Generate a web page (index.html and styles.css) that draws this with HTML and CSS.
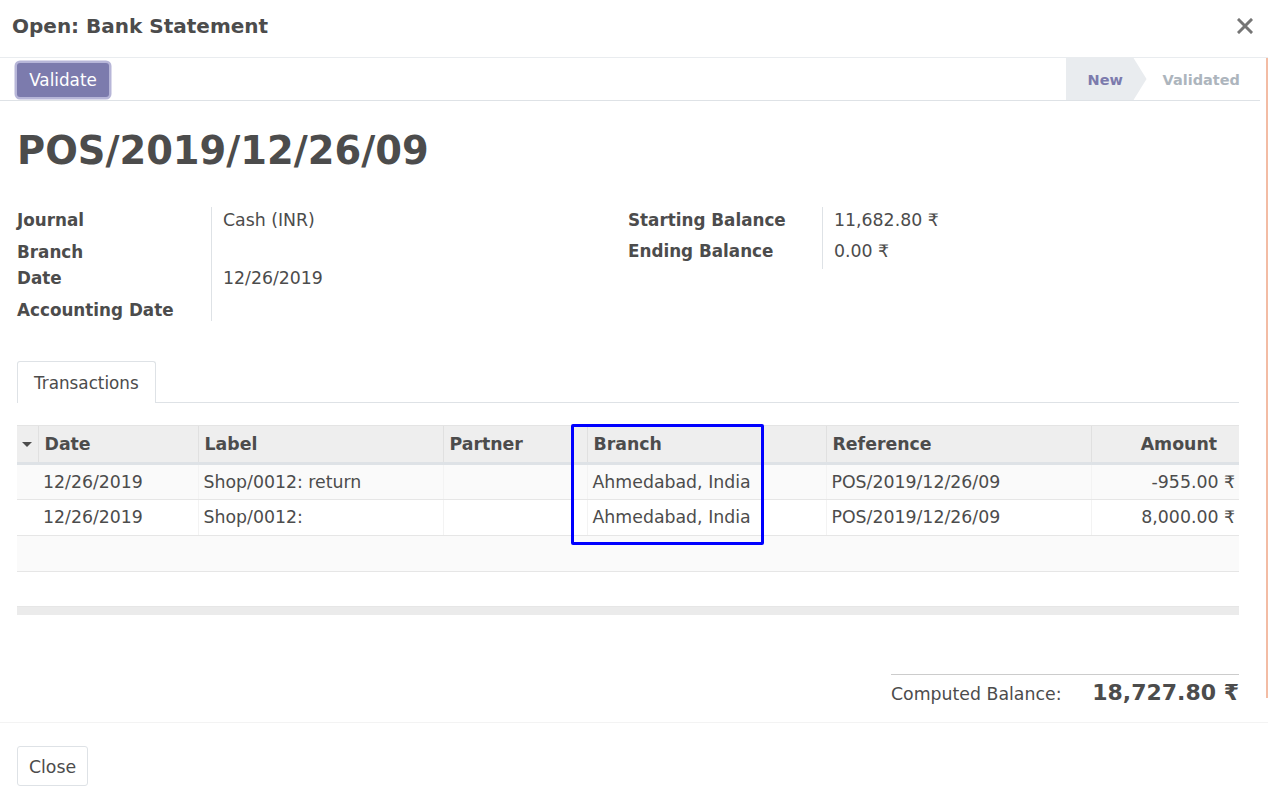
FILE: index.html
```html
<!DOCTYPE html>
<html>
<head>
<meta charset="utf-8">
<link rel="stylesheet" href="styles.css">
</head>
<body>
<div class="modal">
  <header class="modal-header">
    <h4 class="modal-title">Open: Bank Statement</h4>
    <button class="close" aria-label="Close">
      <svg width="16" height="16" viewBox="0 0 16 16"><path d="M2 2 L14 14 M14 2 L2 14" stroke="#757575" stroke-width="3" stroke-linecap="square"/></svg>
    </button>
  </header>
  <main class="modal-body">
    <div class="edge-line"></div>
    <div class="statusbar">
      <div class="actions"><button class="btn-primary">Validate</button></div>
      <div class="stages">
        <span class="stage current">New</span>
        <span class="stage">Validated</span>
      </div>
    </div>
    <div class="sheet">
      <h1 class="record-title">POS/2019/12/26/09</h1>
      <div class="groups">
        <div class="group">
          <div class="row r1"><div class="label">Journal</div><div class="value">Cash (INR)</div></div>
          <div class="row r2"><div class="label">Branch</div><div class="value"></div></div>
          <div class="row r3"><div class="label">Date</div><div class="value">12/26/2019</div></div>
          <div class="row r4"><div class="label">Accounting Date</div><div class="value"></div></div>
        </div>
        <div class="group">
          <div class="row r1"><div class="label">Starting Balance</div><div class="value">11,682.80 ₹</div></div>
          <div class="row r1"><div class="label">Ending Balance</div><div class="value">0.00 ₹</div></div>
        </div>
      </div>
      <div class="tabs"><span class="tab">Transactions</span></div>
      <div class="table-wrap">
        <table class="list">
          <colgroup>
            <col style="width:21px"><col style="width:160px"><col style="width:245px"><col style="width:144px"><col style="width:239px"><col style="width:265px"><col style="width:148px">
          </colgroup>
          <thead>
            <tr>
              <th class="caret-cell"><span class="caret"></span></th>
              <th class="first">Date</th><th>Label</th><th>Partner</th><th>Branch</th><th>Reference</th><th class="num">Amount</th>
            </tr>
          </thead>
          <tbody>
            <tr class="odd data h36"><td class="caret-cell"></td><td class="first">12/26/2019</td><td>Shop/0012: return</td><td></td><td>Ahmedabad, India</td><td>POS/2019/12/26/09</td><td class="num">-955.00 ₹</td></tr>
            <tr class="data h36"><td class="caret-cell"></td><td class="first">12/26/2019</td><td>Shop/0012:</td><td></td><td>Ahmedabad, India</td><td>POS/2019/12/26/09</td><td class="num">8,000.00 ₹</td></tr>
            <tr class="odd h36"><td class="caret-cell"></td><td class="first"></td><td></td><td></td><td></td><td></td><td class="num"></td></tr>
            <tr class="h35"><td class="caret-cell"></td><td class="first"></td><td></td><td></td><td></td><td></td><td class="num"></td></tr>
          </tbody>
          <tfoot><tr><td colspan="7"></td></tr></tfoot>
        </table>
        <div class="highlight"></div>
      </div>
      <div class="subtotal">
        <span class="sub-label">Computed Balance:</span>
        <span class="sub-value">18,727.80 ₹</span>
      </div>
    </div>
  </main>
  <footer class="modal-footer">
    <button class="btn-secondary">Close</button>
  </footer>
</div>
</body>
</html>
```
FILE: styles.css
```css
* { box-sizing: border-box; }
html, body { margin: 0; padding: 0; background: #fff; }
body {
  font-family: "DejaVu Sans", "Liberation Sans", sans-serif;
  font-size: 17.33px;
  line-height: 22px;
  color: #4c4c4c;
  width: 1268px;
  height: 805px;
  overflow: hidden;
}
.modal { width: 1268px; height: 805px; display: flex; flex-direction: column; }
.modal-header {
  height: 58px;
  flex: none;
  border-bottom: 1px solid #e9ecef;
  display: flex;
  align-items: flex-start;
  justify-content: space-between;
  padding: 0 15px 0 12px;
}
.modal-title { margin: 13px 0 0; font-size: 20px; font-weight: bold; line-height: 26px; }
.close { background: none; border: 0; padding: 0; width: 16px; height: 16px; display: flex; margin-top: 18px; }
.modal-body { position: relative; height: 665px; flex: none; border-bottom: 1px solid #f3f3f3; }
.edge-line { position: absolute; right: 0; top: 0; width: 2px; height: 640px; background: #f3bca4; }
.statusbar {
  height: 43px;
  margin-right: 8px;
  border-bottom: 1px solid #dee2e6;
  display: flex;
  justify-content: space-between;
}
.actions { padding: 5px 0 0 17px; }
.btn-primary {
  font: inherit;
  font-size: 16.8px;
  color: #fff;
  background: #7c7bad;
  border: 0;
  border-radius: 3px;
  height: 34px;
  width: 92px;
  padding: 1px 0 0;
  box-shadow: 0 0 0 2.5px #b7b6d8;
  line-height: 33px;
}
.stages { display: flex; height: 42px; padding-right: 20px; }
.stage {
  font-size: 14.5px;
  font-weight: bold;
  color: #adb5bd;
  display: flex;
  align-items: center;
  padding-left: 16px;
  padding-top: 1px;
}
.stage.current {
  color: #7c7bad;
  background: #e9ecef;
  width: 81px;
  padding-left: 22px;
  clip-path: polygon(0 0, 68px 0, 81px 50%, 68px 100%, 0 100%);
}
.sheet { padding: 0 29px 0 17px; }
.record-title { margin: 27px 0 0; font-size: 38.4px; line-height: 46px; font-weight: bold; }
.groups { display: flex; margin-top: 33px; }
.group { width: 611px; }
.row { display: grid; grid-template-columns: 195px 1fr; }
.label { font-weight: bold; font-size: 16.8px; border-right: 1px solid #dee2e6; padding-top: 2px; }
.value { padding: 2px 0 0 11px; }
.r1 { height: 31px; }
.r2 { height: 26px; }
.r2 .label, .r2 .value { padding-top: 3px; }
.r3 { height: 32px; }
.r3 .label, .r3 .value { padding-top: 3px; }
.r4 { height: 24px; }
.r4 .label { padding-top: 3px; }
.tabs { margin-top: 41px; border-bottom: 1px solid #dee2e6; height: 42px; display: flex; }
.tab {
  border: 1px solid #dee2e6;
  border-bottom: 0;
  border-radius: 3px 3px 0 0;
  background: #fff;
  padding: 10px 16px 8px;
  height: 42px;
  margin-bottom: -1px;
  width: 139px;
  font-size: 16.8px;
}
.table-wrap { position: relative; margin-top: 22px; }
.list { border-collapse: collapse; table-layout: fixed; width: 1222px; }
.list thead th {
  background: #eeeeee;
  font-weight: bold;
  text-align: left;
  height: 38px;
  padding: 7px 6px 0;
  vertical-align: top;
  border-top: 1px solid #e4e4e4;
  border-left: 1px solid #e0e0e0;
  border-bottom: 3px solid #dee2e6;
  white-space: nowrap;
}
.list thead th.num { text-align: right; padding-right: 22px; }
.list thead th.caret-cell { border-left: 0; padding: 0; vertical-align: middle; }
.caret {
  display: block;
  width: 0; height: 0;
  margin: 1px 0 0 5px;
  border-left: 5px solid transparent;
  border-right: 5px solid transparent;
  border-top: 5px solid #4c4c4c;
}
.list tbody td {
  padding: 6px 5px 0;
  vertical-align: top;
  border-bottom: 1px solid #e6e6e6;
  white-space: nowrap;
}
.list tbody tr.h35 td { height: 35px; }
.list tbody tr.h36 td { height: 36px; }
.list tbody tr.data td { border-left: 1px solid #f3f3f3; }
.list tbody tr.data td.caret-cell, .list tbody tr.data td.first { border-left: 0; }
.list tbody td.num { text-align: right; padding-right: 4px; }
.list tbody tr.odd td { background: #fafafa; }
.list tfoot td { height: 8px; padding: 0; background: #ebebeb; }
.highlight {
  position: absolute;
  left: 554px;
  top: -1px;
  width: 193px;
  height: 121px;
  border: 3px solid #0000ff;
  border-radius: 2px;
}
.subtotal {
  margin: 59px 0 0 874px;
  width: 348px;
  border-top: 1px solid #cccccc;
  display: flex;
  justify-content: space-between;
  align-items: baseline;
  padding-top: 3px;
}
.sub-label { line-height: 30px; }
.sub-value { font-size: 22px; font-weight: bold; line-height: 30px; }
.modal-footer { padding: 23px 17px; }
.btn-secondary {
  font: inherit;
  color: #4c4c4c;
  background: #fff;
  border: 1px solid #dee2e6;
  border-radius: 3px;
  height: 40px;
  width: 71px;
  padding: 1px 0 0;
}
```
